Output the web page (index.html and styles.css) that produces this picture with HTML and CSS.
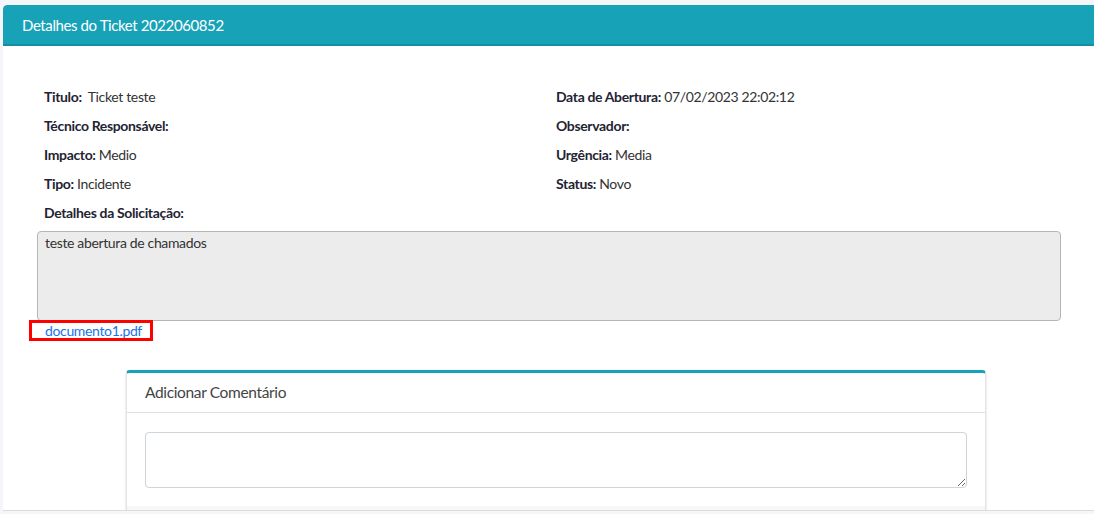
FILE: index.html
```html
<!DOCTYPE html>
<html lang="pt">
<head>
<meta charset="utf-8">
<title>Detalhes do Ticket</title>
<link rel="stylesheet" href="styles.css">
</head>
<body>
<div class="card">
  <div class="card-header">Detalhes do Ticket 2022060852</div>
  <div class="card-body">
    <div class="info-grid">
      <div class="info"><b>Titulo:</b>&nbsp; Ticket teste</div>
      <div class="info"><b>Data de Abertura:</b> 07/02/2023 22:02:12</div>
      <div class="info"><b>Técnico Responsável:</b></div>
      <div class="info"><b>Observador:</b></div>
      <div class="info"><b>Impacto:</b> Medio</div>
      <div class="info"><b>Urgência:</b> Media</div>
      <div class="info"><b>Tipo:</b> Incidente</div>
      <div class="info"><b>Status:</b> Novo</div>
      <div class="info"><b>Detalhes da Solicitação:</b></div>
    </div>
    <div class="details-box">teste abertura de chamados</div>
    <div class="attach-row"><a class="attach" href="#">documento1.pdf</a></div>
    <div class="comment-wrap">
      <div class="comment-card">
        <div class="comment-header">Adicionar Comentário</div>
        <div class="comment-body"><textarea class="comment-input"></textarea></div>
        <div class="comment-footer"></div>
      </div>
    </div>
  </div>
</div>
</body>
</html>
```
FILE: styles.css
```css
html, body {
  margin: 0;
  padding: 0;
}
body {
  background: #f4f6f9;
  font-family: Lato, "Noto Sans", sans-serif;
  font-size: 14px;
  letter-spacing: -0.35px;
  color: #212529;
  overflow: hidden;
  height: 514px;
}
.card {
  margin: 5px 0 0 3px;
  background: #fff;
  border-radius: 4px 0 0 0;
  height: 506px;
  overflow: hidden;
  border-bottom: 1px solid #dcdcdc;
  box-sizing: border-box;
}
.card-header {
  background: #17a2b8;
  color: #fff;
  font-size: 15px;
  letter-spacing: -0.4px;
  height: 41px;
  box-sizing: border-box;
  padding: 11px 0 0 19px;
  border-bottom: 2px solid #148ea1;
  border-radius: 4px 0 0 0;
}
.card-body {
  padding: 36px 0 0 26px;
}
.info-grid {
  display: grid;
  grid-template-columns: 512px 512px;
  padding-left: 15px;
}
.info {
  height: 29px;
  line-height: 29px;
  color: #333;
}
.info b {
  color: #1f2433;
}
.details-box {
  margin: 4px 0 0 8px;
  width: 1024px;
  height: 90px;
  box-sizing: border-box;
  background: #ececec;
  border: 1px solid #b5b5b5;
  border-radius: 4px;
  padding: 1px 7px;
  line-height: 20px;
  color: #333;
}
.attach-row {
  margin-top: -1px;
  height: 21px;
}
.attach {
  display: inline-block;
  border: 3px solid #f00;
  height: 21px;
  box-sizing: border-box;
  width: 124px;
  padding-left: 13px;
  line-height: 15px;
  color: #1a73e8;
  text-decoration: none;
}
.comment-wrap {
  padding: 29px 0 0 97px;
}
.comment-card {
  width: 860px;
  border-top: 3px solid #17a2b8;
  border-radius: 4px 4px 0 0;
  box-shadow: 0 0 1px rgba(0,0,0,.2), 0 1px 3px rgba(0,0,0,.1);
  border-left: 1px solid #e4e4e4;
  border-right: 1px solid #e4e4e4;
  box-sizing: border-box;
}
.comment-header {
  height: 40px;
  box-sizing: border-box;
  padding: 10px 0 0 18px;
  font-size: 15.5px;
  color: #444;
  border-bottom: 1px solid #dee2e6;
}
.comment-body {
  padding: 19px 18px 18px 18px;
}
.comment-input {
  display: block;
  width: 100%;
  height: 56px;
  box-sizing: border-box;
  border: 1px solid #ced4da;
  border-radius: 4px;
  resize: vertical;
  font-family: inherit;
}
.comment-footer {
  height: 20px;
  background: #f7f7f7;
}
```
